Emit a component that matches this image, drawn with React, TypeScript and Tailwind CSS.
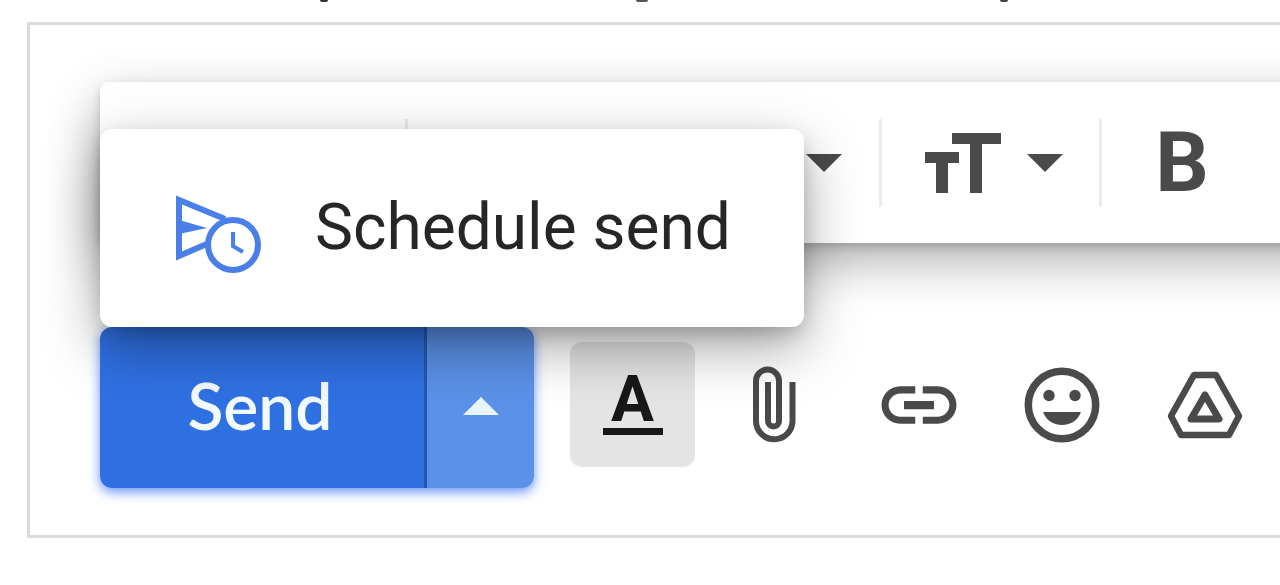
import type { ReactNode } from "react";

function Caret({ up = false }: { up?: boolean }) {
  return (
    <svg viewBox="0 0 36 18" className="w-9 h-[18px] shrink-0" fill="currentColor" aria-hidden="true">
      <path d={up ? "M0 18L18 0l18 18z" : "M0 0h36L18 18z"} />
    </svg>
  );
}

function Divider() {
  return <span className="w-[3px] h-[88px] shrink-0 bg-[#ececec]" />;
}

function ScheduleIcon() {
  return (
    <svg viewBox="0 0 90 90" className="size-[90px] shrink-0" fill="none" stroke="#4a7fe8" aria-hidden="true">
      <path d="M52 36L6 17V73L36 60" strokeWidth="6" />
      <path d="M6 37L34 45L6 51z" fill="#4a7fe8" stroke="none" />
      <circle cx="60" cy="62" r="25" strokeWidth="6" fill="#fff" />
      <path d="M60 49V63L70 69" strokeWidth="4" />
    </svg>
  );
}

function AttachIcon() {
  return (
    <svg viewBox="0 0 90 90" className="size-[90px]" fill="none" stroke="currentColor" strokeWidth="6" aria-hidden="true">
      <path d="M37 22V61a5.500 5.500 0 0 0 11 0V21a11.500 11.500 0 0 0-23 0V61a18.250 18.250 0 0 0 36.500 0V22" />
    </svg>
  );
}

function LinkIcon() {
  return (
    <svg viewBox="0 0 24 24" className="size-[90px]" fill="currentColor" aria-hidden="true">
      <path d="M3.900 12c0-1.710 1.390-3.100 3.100-3.100h4V7H7c-2.760 0-5 2.240-5 5s2.240 5 5 5h4v-1.900H7c-1.710 0-3.100-1.390-3.100-3.100zM8 13.100h8v-2.200H8v2.200zm9-6.100h-4v1.900h4c1.710 0 3.100 1.390 3.100 3.100s-1.390 3.100-3.100 3.100h-4V17h4c2.760 0 5-2.240 5-5s-2.240-5-5-5z" />
    </svg>
  );
}

function EmojiIcon() {
  return (
    <svg viewBox="0 0 90 90" className="size-[90px]" fill="currentColor" aria-hidden="true">
      <circle cx="45" cy="45" r="33.700" fill="none" stroke="currentColor" strokeWidth="7.500" />
      <circle cx="32" cy="35.500" r="5.700" />
      <circle cx="58" cy="35.500" r="5.700" />
      <path d="M26 52H64C61 60 54 65 45 65S29 60 26 52z" />
    </svg>
  );
}

function DriveIcon() {
  return (
    <svg viewBox="0 0 90 90" className="size-[90px]" fill="none" stroke="currentColor" aria-hidden="true">
      <path d="M34 15H56L79 56L69 75H21L11 56z" strokeWidth="6.500" strokeLinejoin="round" />
      <path d="M45 35L59 59H31z" strokeWidth="7" strokeLinejoin="round" />
    </svg>
  );
}

function Tool({ label, children }: { label: string; children: ReactNode }) {
  return (
    <button type="button" aria-label={label} className="flex size-[125px] shrink-0 items-center justify-center text-[#4a4a4a]">
      {children}
    </button>
  );
}

export default function App() {
  return (
    <main className="min-h-screen overflow-x-hidden bg-white font-['Roboto',sans-serif]">
      <div className="flex h-[22px] items-start pl-[320px]" aria-hidden="true">
        <span className="h-0.5 w-2 shrink-0 rounded-b-full bg-[#333]" />
        <span className="ml-[308px] h-0.5 w-3 shrink-0 rounded-b-full bg-[#555]" />
        <span className="ml-[352px] h-0.5 w-2 shrink-0 rounded-b-full bg-[#444]" />
      </div>

      <section className="ml-[27px] overflow-hidden border-y-3 border-l-3 border-[#dbdbdb] pt-[57px] pb-[47px] pl-[70px]">
        <div
          role="toolbar"
          aria-label="Formatting"
          className="-mr-20 flex h-[161px] items-center rounded-l-lg bg-white text-[#4a4a4a] shadow-[0_4px_10px_rgba(0,0,0,0.16),0_18px_50px_rgba(0,0,0,0.32)]"
        >
          <button type="button" aria-label="Undo" className="h-full w-[305px] shrink-0" />
          <Divider />
          <button type="button" aria-label="Font" className="flex h-full w-[471px] shrink-0 items-center justify-end pr-[37px]">
            <Caret />
          </button>
          <Divider />
          <button type="button" aria-label="Size" className="flex h-full w-[217px] shrink-0 items-center justify-end gap-[26px] pr-9">
            <svg viewBox="0 0 76 60" className="h-[60px] w-[76px]" fill="currentColor" aria-hidden="true">
              <path d="M27 0H76V11H57V60H45V11H27z" />
              <path d="M0 19H34V30H23V60H11V30H0z" />
            </svg>
            <Caret />
          </button>
          <Divider />
          <button type="button" aria-label="Bold" className="flex h-full w-[160px] shrink-0 items-center justify-center text-[84px] font-bold">
            B
          </button>
        </div>

        <div className="mt-[84px] flex items-center gap-9">
          <div className="relative z-10 flex h-[161px] shrink-0">
            <div className="flex overflow-hidden rounded-xl shadow-[0_4px_12px_rgba(66,120,244,0.8)]">
              <button type="button" className="w-[324px] bg-[#2f70e2] pr-1 pb-1.5 font-['Lato',sans-serif] text-[66px] font-semibold text-[#f2faff]">
                Send
              </button>
              <button type="button" aria-label="More send options" className="flex w-[110px] items-center justify-center border-l-3 border-[#2459b0] bg-[#5b91e8] pb-1 text-[#e8f5ff]">
                <Caret up />
              </button>
            </div>
            <div
              role="menu"
              className="absolute bottom-full left-0 w-[704px] rounded-xl bg-white shadow-[0_8px_20px_-4px_rgba(0,0,0,0.22),0_20px_56px_rgba(0,0,0,0.36)]"
            >
              <button type="button" role="menuitem" className="flex h-[198px] w-full items-center gap-[52px] pl-[73px] text-[64px] text-[#262626]">
                <ScheduleIcon />
                Schedule send
              </button>
            </div>
          </div>

          <div className="flex gap-[18px] pb-1.5">
            <button type="button" aria-label="Formatting options" className="flex size-[125px] shrink-0 flex-col items-center justify-center gap-0.5 rounded-xl bg-[#e4e4e4] text-[64px] leading-[52px] font-bold text-[#181818]">
              A
              <span className="h-[7px] w-[60px] bg-[#181818]" />
            </button>
            <Tool label="Attach files"><AttachIcon /></Tool>
            <Tool label="Insert link"><LinkIcon /></Tool>
            <Tool label="Insert emoji"><EmojiIcon /></Tool>
            <Tool label="Insert files using Drive"><DriveIcon /></Tool>
          </div>
        </div>
      </section>
    </main>
  );
}
